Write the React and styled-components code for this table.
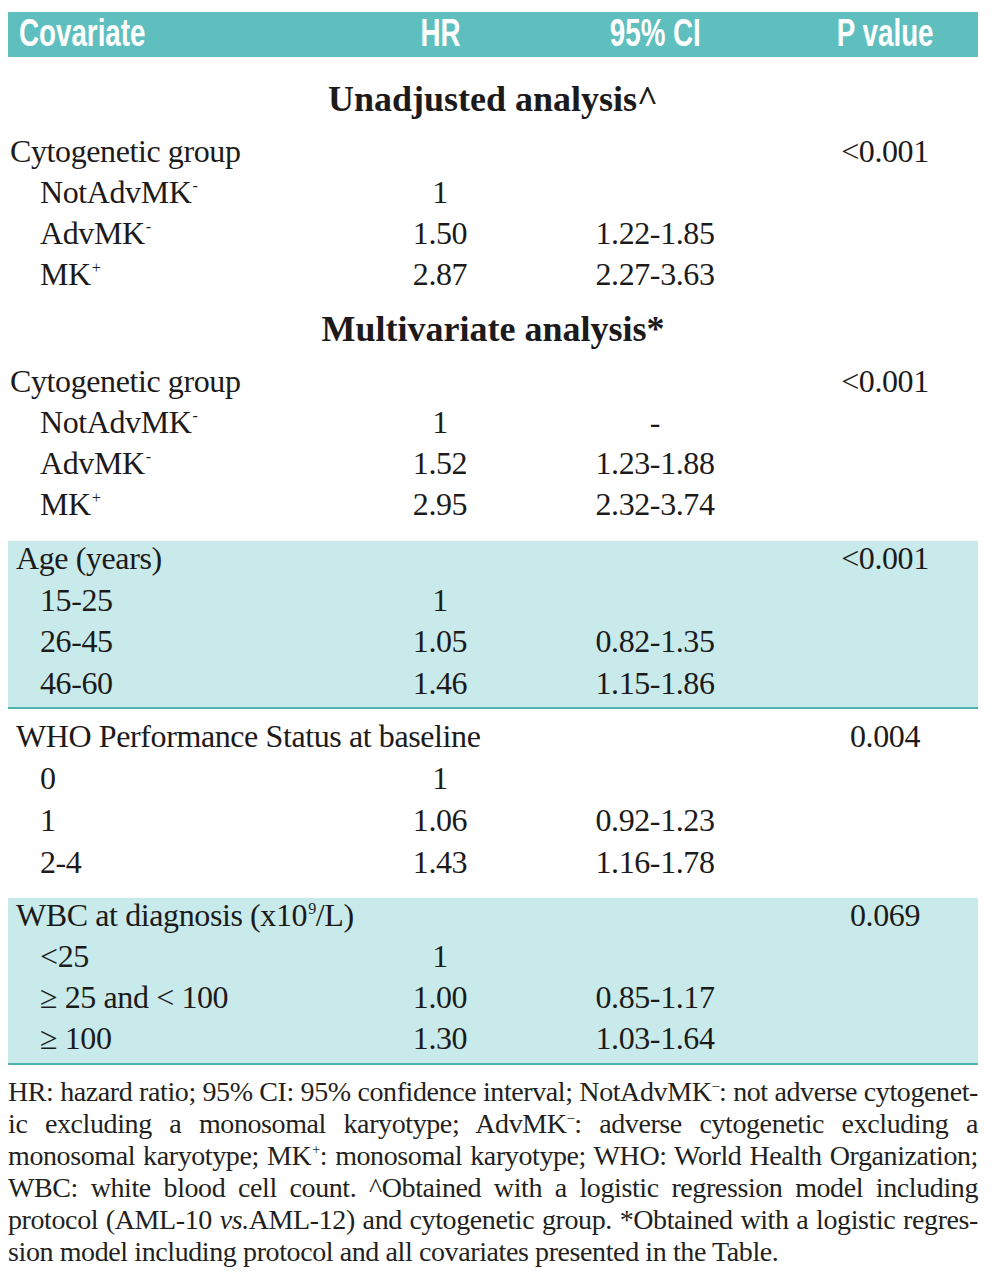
import React from "react"
import styled, { createGlobalStyle } from "styled-components"

const GlobalStyle = createGlobalStyle`
  html, body {
    margin: 0;
    padding: 0;
    background: #ffffff;
  }
`

const Page = styled.div`
  width: 970px;
  padding: 12px 15px 0 8px;
  font-family: "Liberation Serif", "Times New Roman", serif;
  color: #1c1a1a;
`

const Grid = styled.div`
  display: grid;
  grid-template-columns: 362px 140px 290px 178px;
  align-items: start;
`

const HeaderBar = styled(Grid)`
  height: 45px;
  background: #5fbfbf;
  color: #ffffff;
  font-family: "Liberation Sans", "Arial", sans-serif;
  font-weight: 700;
  font-size: 38px;
  line-height: 42px;
  margin-bottom: 11px;
`

const HeadCell = styled.div`
  text-align: ${(p) => (p.$left ? "left" : "center")};
  padding-left: ${(p) => (p.$left ? "11px" : "0")};
  padding-right: ${(p) => (p.$last ? "8px" : "0")};
`

/* the reference uses a condensed grotesque; squeeze the bold sans to match */
const Narrow = styled.span`
  display: inline-block;
  transform: scaleX(0.73);
  transform-origin: ${(p) => (p.$left ? "left" : "center")} center;
  white-space: nowrap;
`

const Section = styled.div`
  padding-top: 14px;
`

const Heading = styled.div`
  height: 35px;
  line-height: 35px;
  padding-bottom: 6px;
  margin-bottom: 11px;
  text-align: center;
  font-weight: 700;
  font-size: 36px;
`

const Group = styled.div`
  background: ${(p) => (p.$shaded ? "#c8eaea" : "transparent")};
  border-bottom: 2px solid ${(p) => (p.$shaded ? "#4fb4af" : "transparent")};
  margin-top: ${(p) => p.$gap || 0}px;
  padding-top: ${(p) => p.$pad || 0}px;
`

const Row = styled(Grid)`
  height: ${(p) => p.$h || 41}px;
  font-size: 32px;
  line-height: 35px;
  letter-spacing: -0.4px;
`

const Label = styled.div`
  padding-left: ${(p) => p.$indent}px;
  white-space: nowrap;
`

const Value = styled.div`
  text-align: center;
  padding-right: ${(p) => (p.$last ? "8px" : "0")};
  white-space: nowrap;
`

const Sup = styled.sup`
  font-size: 0.5em;
  line-height: 0;
  vertical-align: 0.75em;
  margin-left: 1px;
`

const Notes = styled.div`
  margin-top: 11px;
  font-size: 28px;
  line-height: 32px;
  color: #231f20;
  letter-spacing: -0.4px;
`

const NoteLine = styled.div`
  white-space: nowrap;
  text-align: justify;
  text-align-last: ${(p) => (p.$end ? "left" : "justify")};
  word-spacing: ${(p) => p.$ws || 0}px;
`

const Ital = styled.i`
  font-style: italic;
`

const minus = <Sup>-</Sup>
const plus = <Sup>+</Sup>

const unadjusted = [
  { label: "Cytogenetic group", indent: 2, p: "<0.001" },
  { label: <>NotAdvMK{minus}</>, indent: 32, hr: "1" },
  { label: <>AdvMK{minus}</>, indent: 32, hr: "1.50", ci: "1.22-1.85" },
  { label: <>MK{plus}</>, indent: 32, hr: "2.87", ci: "2.27-3.63" },
]

const multivariate = [
  { label: "Cytogenetic group", indent: 2, p: "<0.001" },
  { label: <>NotAdvMK{minus}</>, indent: 32, hr: "1", ci: "-" },
  { label: <>AdvMK{minus}</>, indent: 32, hr: "1.52", ci: "1.23-1.88" },
  { label: <>MK{plus}</>, indent: 32, hr: "2.95", ci: "2.32-3.74" },
]

const groups = [
  {
    shaded: true,
    gap: 13,
    pad: 0,
    h: 41.5,
    rows: [
      { label: "Age (years)", indent: 8, p: "<0.001" },
      { label: "15-25", indent: 32, hr: "1" },
      { label: "26-45", indent: 32, hr: "1.05", ci: "0.82-1.35" },
      { label: "46-60", indent: 32, hr: "1.46", ci: "1.15-1.86" },
    ],
  },
  {
    shaded: false,
    gap: 0,
    pad: 10,
    h: 42,
    rows: [
      { label: "WHO Performance Status at baseline", indent: 8, p: "0.004" },
      { label: "0", indent: 32, hr: "1" },
      { label: "1", indent: 32, hr: "1.06", ci: "0.92-1.23" },
      { label: "2-4", indent: 32, hr: "1.43", ci: "1.16-1.78" },
    ],
  },
  {
    shaded: true,
    gap: 8.5,
    pad: 0,
    h: 41.3,
    rows: [
      { label: <>WBC at diagnosis (x10<Sup>9</Sup>/L)</>, indent: 8, p: "0.069" },
      { label: "<25", indent: 32, hr: "1" },
      { label: "≥ 25 and < 100", indent: 32, hr: "1.00", ci: "0.85-1.17" },
      { label: "≥ 100", indent: 32, hr: "1.30", ci: "1.03-1.64" },
    ],
  },
]

function TableRow({ row, h }) {
  return (
    <Row $h={h}>
      <Label $indent={row.indent}>{row.label}</Label>
      <Value>{row.hr}</Value>
      <Value>{row.ci}</Value>
      <Value $last>{row.p}</Value>
    </Row>
  )
}

export default function App() {
  return (
    <Page>
      <GlobalStyle />
      <HeaderBar>
        <HeadCell $left>
          <Narrow $left>Covariate</Narrow>
        </HeadCell>
        <HeadCell>
          <Narrow>HR</Narrow>
        </HeadCell>
        <HeadCell>
          <Narrow>95% CI</Narrow>
        </HeadCell>
        <HeadCell $last>
          <Narrow>P value</Narrow>
        </HeadCell>
      </HeaderBar>

      <Section>
        <Heading>Unadjusted analysis^</Heading>
        {unadjusted.map((row, i) => (
          <TableRow key={i} row={row} />
        ))}
      </Section>

      <Section>
        <Heading>Multivariate analysis*</Heading>
        {multivariate.map((row, i) => (
          <TableRow key={i} row={row} />
        ))}
      </Section>

      {groups.map((g, gi) => (
        <Group key={gi} $shaded={g.shaded} $gap={g.gap} $pad={g.pad}>
          {g.rows.map((row, i) => (
            <TableRow key={i} row={row} h={g.h} />
          ))}
        </Group>
      ))}

      <Notes>
        <NoteLine $ws={-3}>
          HR: hazard ratio; 95% CI: 95% confidence interval; NotAdvMK<Sup>–</Sup>: not adverse cytogenet-
        </NoteLine>
        <NoteLine>
          ic excluding a monosomal karyotype; AdvMK<Sup>–</Sup>: adverse cytogenetic excluding a
        </NoteLine>
        <NoteLine $ws={-3}>
          monosomal karyotype; MK<Sup>+</Sup>: monosomal karyotype; WHO: World Health Organization;
        </NoteLine>
        <NoteLine>
          WBC: white blood cell count. ^Obtained with a logistic regression model including
        </NoteLine>
        <NoteLine $ws={-3}>
          protocol (AML-10 <Ital>vs.</Ital>AML-12) and cytogenetic group. *Obtained with a logistic regres-
        </NoteLine>
        <NoteLine $end>
          sion model including protocol and all covariates presented in the Table.
        </NoteLine>
      </Notes>
    </Page>
  )
}
